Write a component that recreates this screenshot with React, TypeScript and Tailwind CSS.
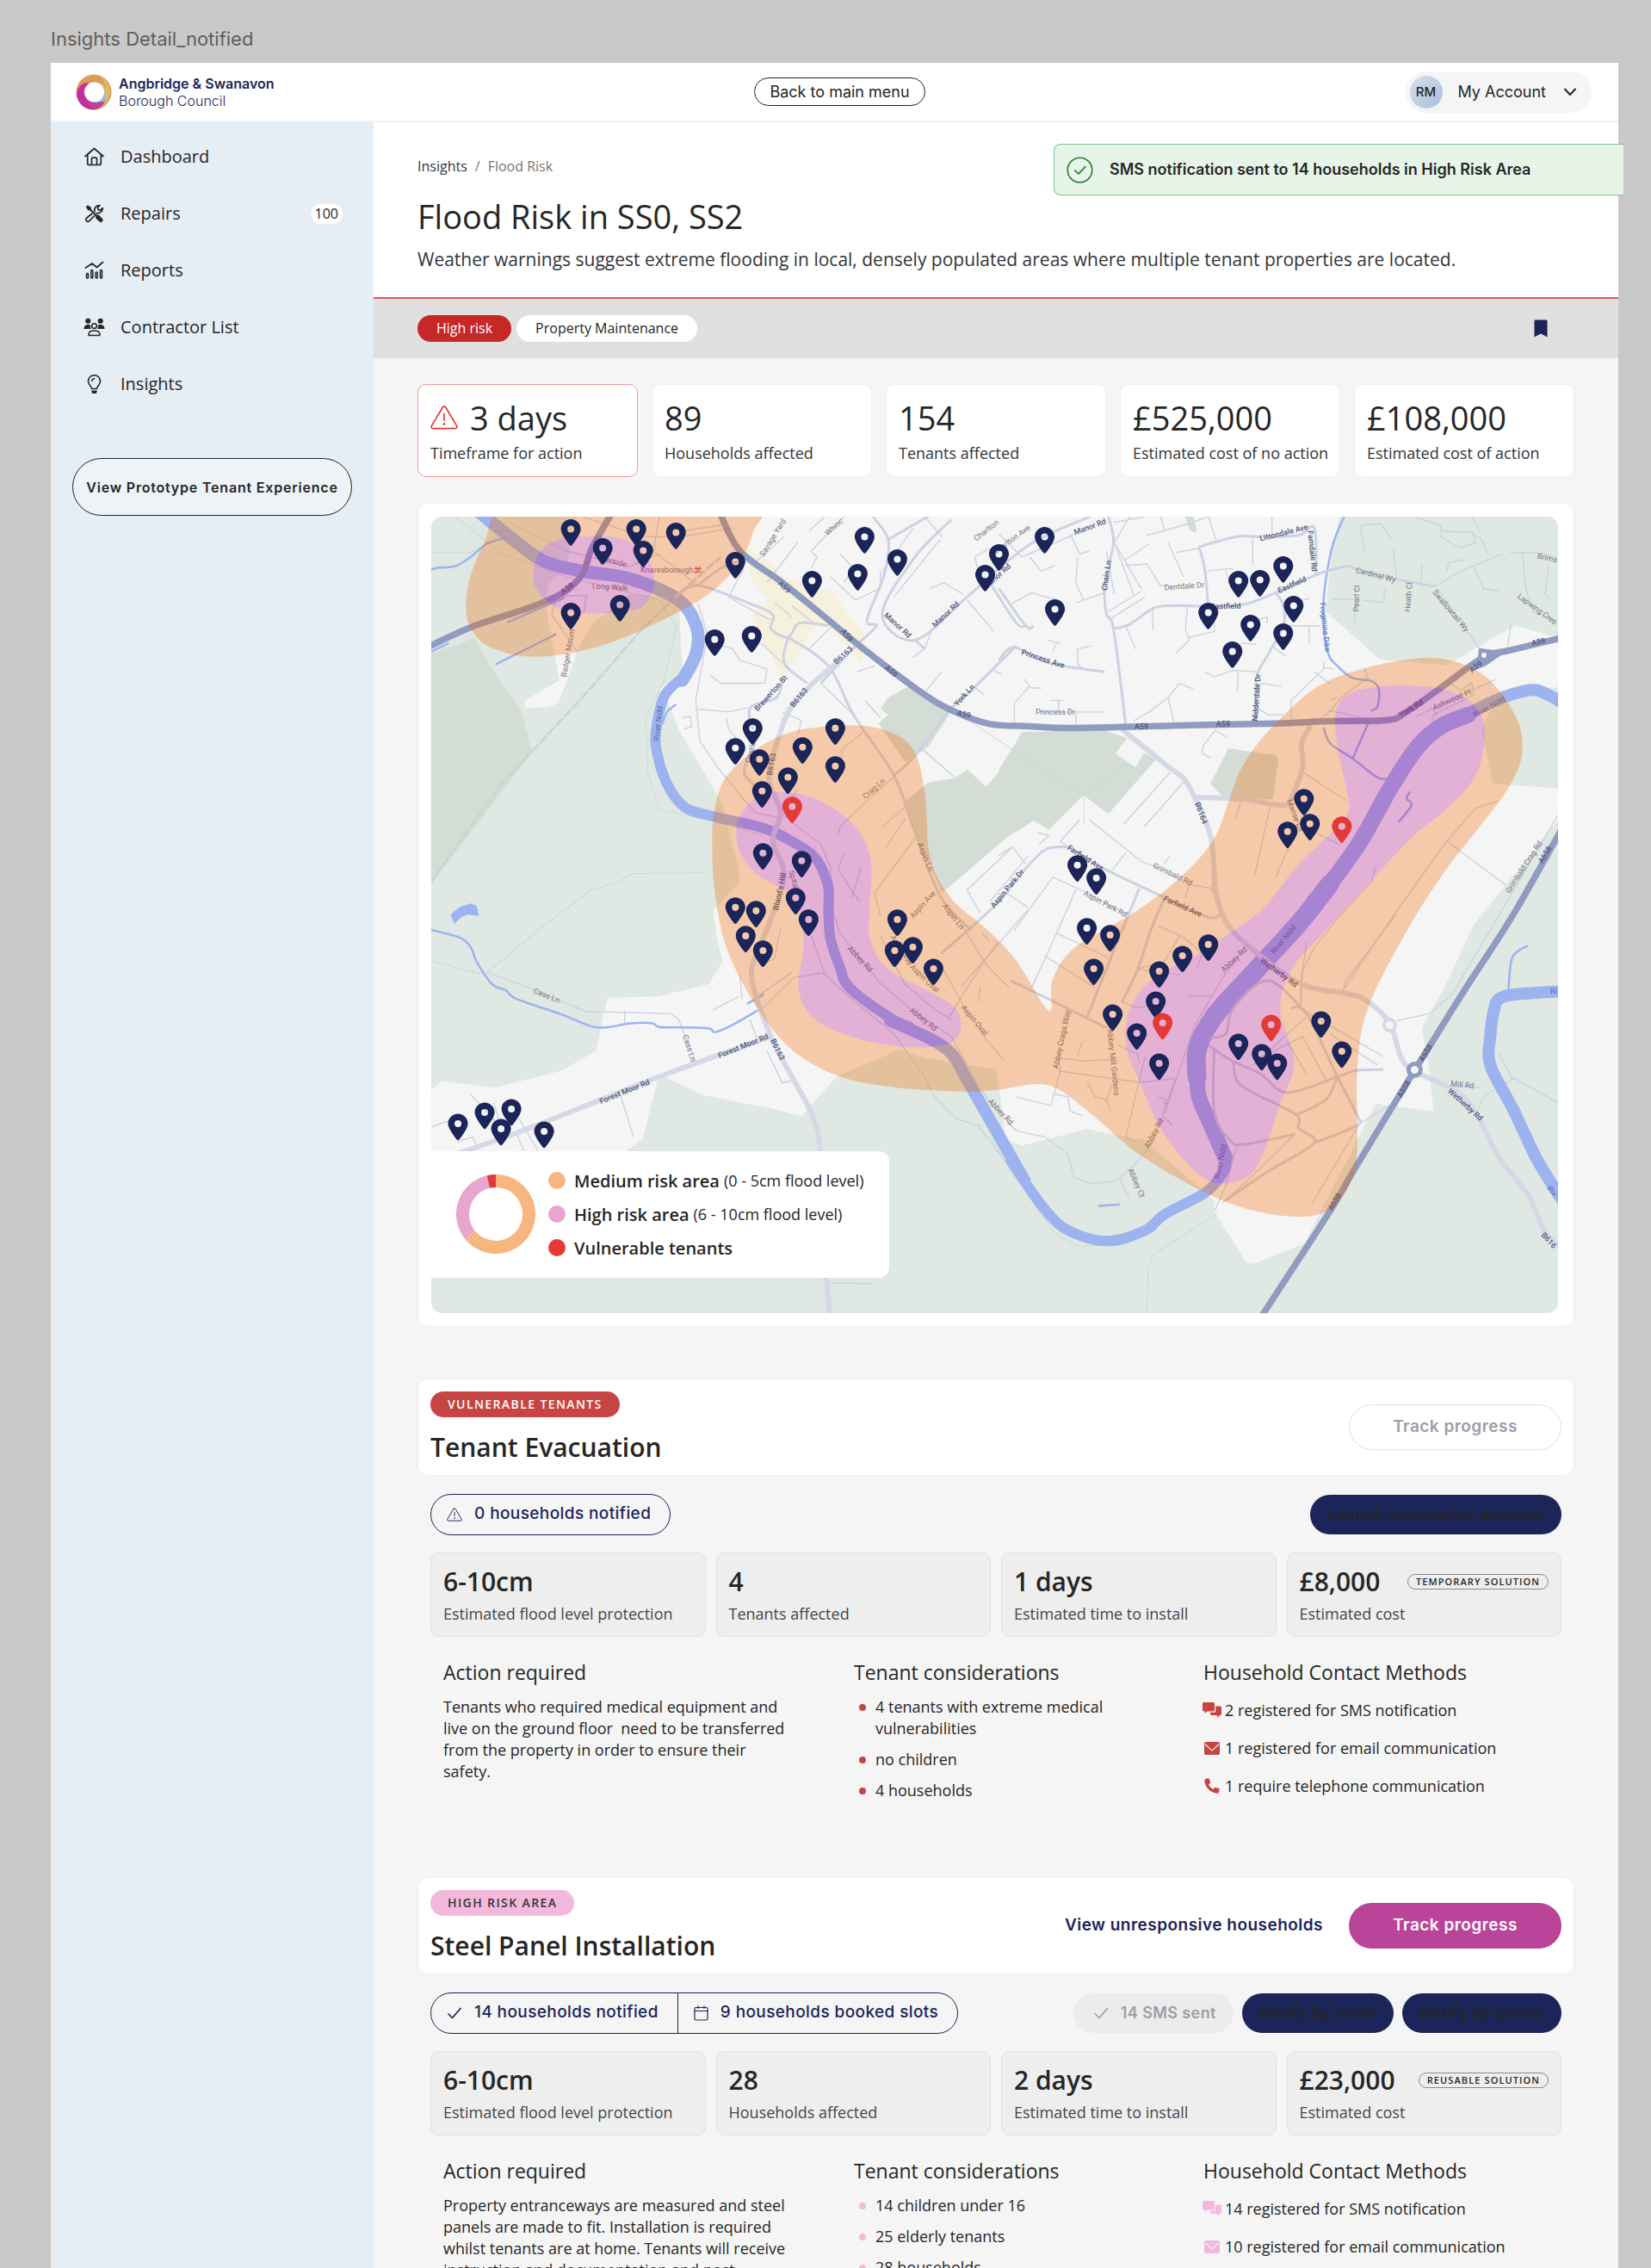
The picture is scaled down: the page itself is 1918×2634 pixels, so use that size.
import React from "react";

/* ------------------------------------------------------------------ */
/* Icons                                                               */
/* ------------------------------------------------------------------ */

type IconProps = { className?: string };

const Logo = () => (
  <svg viewBox="0 0 42 42" className="size-[42px] shrink-0" aria-hidden="true">
    <circle cx="21" cy="21" r="20.5" fill="#dc9d5c" />
    <path d="M28 2A20.5 20.5 0 0 1 31 37C39 30 37 10 28 2Z" fill="#dcbc66" />
    <path d="M25 10A14 14 0 0 1 36 30L30 26Z" fill="#dcbc66" />
    <path d="M14 10A20.5 20.5 0 0 0 21 41.500C27 41 32 37 34 30L21 28Z" fill="#b9449a" />
    <path d="M14 10C4 10 0 20 1.500 27C4 35 10 41 21 41.500C13 36 8 22 14 10Z" fill="#c3309a" />
    <path d="M34 20L34 32L22 33Z" fill="#9fb5d8" />
    <circle cx="21.500" cy="21" r="11.500" fill="#fff" />
  </svg>
);

const HomeIcon = ({ className }: IconProps) => (
  <svg viewBox="0 0 24 24" className={className} fill="none" stroke="currentColor" strokeWidth="1.700" strokeLinecap="round" strokeLinejoin="round" aria-hidden="true">
    <path d="M1.500 11.500L12 2.500L22.500 11.500" />
    <path d="M4.200 10V19.500A2 2 0 0 0 6.200 21.500H17.800A2 2 0 0 0 19.800 19.500V10" />
    <path d="M9 21.200V14.500A1.300 1.300 0 0 1 10.300 13.200H13.700A1.300 1.300 0 0 1 15 14.500V21.200" />
  </svg>
);

const ToolsIcon = ({ className }: IconProps) => (
  <svg viewBox="0 0 24 24" className={className} aria-hidden="true">
    <path d="M12.500 9.500C11.700 6 14 2.300 18.500 2.500L16 5.300L16.600 7.600L19 8.200L21.700 5.600C22 9.500 18.800 12 15 11.500L6.200 20.700A2.300 2.300 0 0 1 2.900 17.500L12.500 9.500Z" fill="none" stroke="currentColor" strokeWidth="1.700" strokeLinejoin="round" />
    <path d="M2 4.300L4.300 2L8.500 4.500L8.800 7L15 13.300L17.200 13.200L22.300 18.500C23 20.500 20.500 23 18.500 22.300L13.200 17.200L13.300 15L7 8.800L4.500 8.500Z" fill="currentColor" stroke="#e5edf5" strokeWidth=".6" />
  </svg>
);

const ChartIcon = ({ className }: IconProps) => (
  <svg viewBox="0 0 24 24" className={className} fill="none" stroke="currentColor" strokeLinecap="round" strokeLinejoin="round" aria-hidden="true">
    <path d="M2 9L9.500 4L15 8.500L22 2.500" strokeWidth="1.700" />
    <g strokeWidth="1.500">
      <rect x="3" y="15.500" width="2" height="5.500" rx=".8" />
      <rect x="8.300" y="11.500" width="2" height="9.500" rx=".8" />
      <rect x="13.700" y="14" width="2" height="7" rx=".8" />
      <rect x="19" y="11.500" width="2" height="9.500" rx=".8" />
    </g>
  </svg>
);

const PeopleIcon = ({ className }: IconProps) => (
  <svg viewBox="0 0 26 22" className={className} aria-hidden="true">
    <circle cx="5.500" cy="3.500" r="3.200" fill="currentColor" />
    <circle cx="20.500" cy="3.500" r="3.200" fill="currentColor" />
    <path d="M.5 13C.5 9.500 3 8 5.500 8C7 8 8 8.500 8.500 9C8.200 10.500 8.500 12 9 13Z" fill="currentColor" />
    <path d="M25.500 13C25.500 9.500 23 8 20.500 8C19 8 18 8.500 17.500 9C17.800 10.500 17.500 12 17 13Z" fill="currentColor" />
    <circle cx="13" cy="9.500" r="3" fill="none" stroke="currentColor" strokeWidth="1.600" />
    <path d="M6.300 20.800C6.300 17 8.500 15.500 11 15.500H15C17.500 15.500 19.700 17 19.700 20.800Z" fill="none" stroke="currentColor" strokeWidth="1.600" strokeLinejoin="round" />
  </svg>
);

const BulbIcon = ({ className }: IconProps) => (
  <svg viewBox="0 0 24 24" className={className} fill="none" stroke="currentColor" strokeWidth="1.600" strokeLinecap="round" strokeLinejoin="round" aria-hidden="true">
    <path d="M9 17.500C9 14.500 5 13 5 8.700A7 7 0 0 1 19 8.700C19 13 15 14.500 15 17.500Z" />
    <path d="M9.300 8.500A3 3 0 0 1 12 5.700" />
    <path d="M9.500 20.200H14.500L13.700 22.300H10.300Z" fill="currentColor" />
  </svg>
);

const WarningIcon = ({ className }: IconProps) => (
  <svg viewBox="0 0 32 28" className={className} fill="none" stroke="currentColor" strokeWidth="1.700" strokeLinecap="round" strokeLinejoin="round" aria-hidden="true">
    <path d="M14.300 2L1.400 23.600A2 2 0 0 0 3.100 26.700H28.900A2 2 0 0 0 30.600 23.600L17.700 2A2 2 0 0 0 14.300 2Z" />
    <path d="M16 9.500V17" />
    <circle cx="16" cy="21.500" r=".6" fill="currentColor" />
  </svg>
);

const CheckIcon = ({ className }: IconProps) => (
  <svg viewBox="0 0 16 14" className={className} fill="none" stroke="currentColor" strokeWidth="1.700" strokeLinecap="round" strokeLinejoin="round" aria-hidden="true">
    <path d="M1 8L5.500 12.500L15 1.500" />
  </svg>
);

const CircleCheckIcon = ({ className }: IconProps) => (
  <svg viewBox="0 0 32 32" className={className} fill="none" stroke="currentColor" strokeWidth="1.700" strokeLinecap="round" strokeLinejoin="round" aria-hidden="true">
    <circle cx="16" cy="16" r="14.700" />
    <path d="M10 16.500L14.500 20.500L22.500 12" />
  </svg>
);

const CalendarIcon = ({ className }: IconProps) => (
  <svg viewBox="0 0 17 18" className={className} fill="none" stroke="currentColor" strokeWidth="1.200" strokeLinecap="round" strokeLinejoin="round" aria-hidden="true">
    <rect x="1" y="2.500" width="15" height="14.500" rx="1.500" />
    <path d="M1 6.500H16M5 .8V3.500M12 .8V3.500" />
  </svg>
);

const ChevronIcon = ({ className }: IconProps) => (
  <svg viewBox="0 0 16 10" className={className} fill="none" stroke="currentColor" strokeWidth="2" strokeLinecap="round" strokeLinejoin="round" aria-hidden="true">
    <path d="M2 1.500L8 8L14 1.500" />
  </svg>
);

const BookmarkIcon = ({ className }: IconProps) => (
  <svg viewBox="0 0 17 22" className={className} fill="currentColor" aria-hidden="true">
    <path d="M2 .5H15A1.500 1.500 0 0 1 16.500 2V21.500L8.500 17.500L.5 21.500V2A1.500 1.500 0 0 1 2 .5Z" />
  </svg>
);

const ChatIcon = ({ className }: IconProps) => (
  <svg viewBox="0 0 22 18" className={className} fill="currentColor" aria-hidden="true">
    <path d="M1.500 0H12.500A1.500 1.500 0 0 1 14 1.500V9A1.500 1.500 0 0 1 12.500 10.500H5.500L2.800 13V10.500H1.500A1.500 1.500 0 0 1 0 9V1.500A1.500 1.500 0 0 1 1.500 0Z" />
    <path d="M15.200 4.500H20.500A1.500 1.500 0 0 1 22 6V13.500A1.500 1.500 0 0 1 20.500 15H19.200V17.800L16 15H10.500A1.500 1.500 0 0 1 9 13.500V11.800H13.700A1.500 1.500 0 0 0 15.200 10.300Z" />
  </svg>
);

const MailIcon = ({ className }: IconProps) => (
  <svg viewBox="0 0 18 15" className={className} aria-hidden="true">
    <rect width="18" height="15" rx="1.700" fill="currentColor" />
    <path d="M1 2.500L7.800 9.200A1.700 1.700 0 0 0 10.200 9.200L17 2.500" fill="none" stroke="#f5f5f5" strokeWidth="1.100" />
  </svg>
);

const PhoneIcon = ({ className }: IconProps) => (
  <svg viewBox="0 0 18 18" className={className} fill="currentColor" aria-hidden="true">
    <path d="M3.800.3L5.500.8A1 1 0 0 1 6.200 1.600L7 5A1.200 1.200 0 0 1 6.500 6.300L5 7.500C6.200 9.800 8.200 11.800 10.500 13L11.700 11.500A1.200 1.200 0 0 1 13 11.100L16.700 12A1.200 1.200 0 0 1 17.600 13.300L17.200 16A2 2 0 0 1 15 17.700C7 17 1 11 .3 3A2 2 0 0 1 1.800.9Z" />
  </svg>
);

/* ------------------------------------------------------------------ */
/* Map drawing                                                         */
/* ------------------------------------------------------------------ */

type Sheet = "nw" | "ne" | "sw" | "se";
const ORIGIN: Record<Sheet, [number, number]> = {
  nw: [0, 0],
  ne: [1523, 0],
  sw: [0, 1440],
  se: [1523, 1440],
};

// Survey units on a sheet -> drawing units of the map.
const place = (sheet: Sheet, u: number, v: number): [number, number] => [
  Math.round(((u + ORIGIN[sheet][0]) / 2.24 - 21) * 10) / 10,
  Math.round(((v + ORIGIN[sheet][1]) / 3 - 20) * 10) / 10,
];

const parse = (sheet: Sheet, pts: string) =>
  pts.split(" ").map((p) => {
    const [u, v] = p.split(",").map(Number);
    return place(sheet, u, v);
  });

const poly = (sheet: Sheet, pts: string, close = false) =>
  "M" + parse(sheet, pts).map((p) => p.join(" ")).join("L") + (close ? "Z" : "");

const curve = (sheet: Sheet, pts: string, close = false) => {
  const p = parse(sheet, pts);
  const n = p.length;
  const at = (i: number) => (close ? p[(i + n) % n] : p[Math.max(0, Math.min(n - 1, i))]);
  let d = "M" + p[0].join(" ");
  for (let i = 0; i < (close ? n : n - 1); i++) {
    const [a, b, c, e] = [at(i - 1), at(i), at(i + 1), at(i + 2)];
    d += `C${b[0] + (c[0] - a[0]) / 6} ${b[1] + (c[1] - a[1]) / 6} ${c[0] - (e[0] - b[0]) / 6} ${c[1] - (e[1] - b[1]) / 6} ${c[0]} ${c[1]}`;
  }
  return d + (close ? "Z" : "");
};

const GREEN: [Sheet, string][] = [
  ["nw", "0,0 425,0 425,60 400,230 350,300 345,370 380,630 290,700 290,726 350,723 378,710 430,520 460,440 560,330 690,340 700,600 640,660 668,720 690,800 800,1050 850,1300 845,1340 780,1430 776,1560 0,1560"],
  ["sw", "0,0 780,0 790,90 805,170 768,248 640,290 505,295 475,480 385,550 210,608 150,597 75,585 0,670"],
  ["sw", "640,560 750,633 930,680 1010,708 1100,570 1265,475 1330,505 1515,545 1525,620 1540,790 1583,810 1751,752 1898,790 2083,1000 2083,1040 2168,1220 2188,1220 2318,1150 2503,665 2653,690 2643,550 2623,400 2678,270 2758,40 3023,-400 3023,1480 0,1480 0,830 555,830 597,785"],
  ["ne", "890,40 1500,40 1500,500 1345,440 1300,470 1165,578 990,557 850,390 865,180"],
  ["ne", "1330,655 1500,655 1500,1010 1285,990 1255,800 1290,700"],
];

const WOOD: [Sheet, string][] = [
  ["nw", "0,560 160,482 200,580 280,735 310,880 0,1420"],
  ["nw", "1210,780 1235,750 1215,730 1235,690 1290,650 1400,735 1340,860 1280,915"],
  ["nw", "1280,1050 1340,985 1410,970 1440,940 1490,1000 1568,880 1568,1150 1375,1370 1320,1200"],
  ["ne", "0,1190 0,940 40,855 60,810 270,802 333,830 303,885 355,932 378,882 408,905 285,1095 220,1030 130,1150 90,1118 60,1145"],
  ["ne", "550,990 597,867 718,890 727,905 712,1045 582,1035"],
  ["ne", "478,40 503,40 515,115 498,110"],
];

const RIVER: [Sheet, number, string][] = [
  ["nw", 15, "150,20 260,140 340,215 440,250 560,275 690,350 738,450 735,540 700,630"],
  ["nw", 12, "712,610 655,680 632,800 634,880 660,990 705,1070 770,1100 900,1140 970,1178"],
  ["nw", 12, "950,1165 1040,1240 1078,1340 1080,1440 1085,1530 1110,1630 1135,1700 1240,1805 1290,1835"],
  ["sw", 14, "1240,375 1340,435 1400,490 1440,580 1500,720 1568,880 1590,930"],
  ["se", 12, "30,860 75,950 125,1040 180,1105 280,1142 380,1105 430,1050 540,970 588,890 588,830"],
  ["se", 18, "588,850 545,720 520,640 515,560 515,470 560,360"],
  ["se", 22, "515,570 517,470 560,360 640,240 730,110 790,20 860,-100"],
  ["ne", 19, "820,1400 860,1340 940,1190 1020,1000 1090,860 1150,790 1220,750"],
  ["ne", 14, "1140,795 1220,745 1310,690 1380,664 1420,675 1500,735"],
  ["se", 14, "1500,270 1345,283 1300,300 1287,340 1278,430 1278,530 1340,690 1400,860 1470,1010"],
];

const STREAM: [Sheet, string][] = [
  ["ne", "905,40 870,150 850,280 843,400 855,530 880,580 920,622 968,632 988,660 985,720 970,735"],
  ["sw", "40,57 120,85 150,120 165,170 207,250 240,268 270,300 380,350 465,395 510,397 560,385 620,383 640,397 700,398 770,402 785,415 830,390 895,340"],
  ["sw", "870,315 910,285"],
  ["nw", "40,247 65,238 110,232 150,200 190,155 230,138"],
  ["nw", "40,535 90,502"],
  ["nw", "217,573 370,470"],
  ["nw", "247,427 392,343"],
  ["nw", "648,780 660,740 682,715"],
  ["ne", "845,797 862,850 920,902 985,968 1022,970"],
  ["ne", "965,765 920,902"],
  ["ne", "1068,1020 1060,1042 1073,1065 1040,1122"],
  ["se", "1325,272 1335,155 1373,115"],
  ["se", "260,1020 313,1015"],
];

const A_ROAD: [Sheet, string][] = [
  ["nw", "30,520 150,445 300,378 390,325 440,260 465,170 520,40"],
  ["nw", "795,40 850,180 960,290 1080,420 1180,530 1330,680 1410,740 1500,782 1600,790 1723,796 2020,786 2243,780 2383,772 2533,768 2583,740 2673,655 2783,550 2853,525 3000,478"],
  ["se", "680,1410 860,1040 930,880 1080,550 1210,270 1340,0 1500,-380"],
];

const B_ROAD: [Sheet, string][] = [
  ["nw", "1100,570 1040,640 980,730 950,830 925,970 955,1090 935,1190 965,1310 925,1480 890,1590 882,1680 930,1870 985,2010 1040,2150 1060,2290 1068,2600 1085,2860"],
  ["ne", "320,800 440,930 490,990 550,1170 565,1370 600,1490 690,1600 790,1690 900,1720 950,1740 1015,1820 1045,1940 1080,1990 1200,2070 1250,2160 1300,2290 1380,2430 1420,2550 1490,2640"],
  ["sw", "100,845 290,755 640,570 930,430"],
  ["ne", "515,1037 640,1045 735,1065 760,1040 790,930 787,850 810,790"],
];

const ROAD: [Sheet, string][] = [
  ["nw", "1195,60 1235,140 1225,260 1180,420 1205,440 1150,510"],
  ["nw", "1235,140 1350,50"],
  ["nw", "1080,440 1005,430 975,480 930,450 935,400 870,360 740,300 680,340"],
  ["nw", "975,480 965,570 1025,640"],
  ["nw", "975,480 1080,580 1145,750 1250,960 1300,1140 1370,1380 1450,1500"],
  ["nw", "1400,70 1305,200 1220,400 1305,490 1440,340 1600,160 1760,60"],
  ["nw", "1305,490 1330,520"],
  ["nw", "1500,290 1568,430 1595,440"],
  ["nw", "1568,510 1455,660 1405,720 1380,760 1300,900 1250,960"],
  ["nw", "960,620 945,690 880,720 875,765 885,800"],
  ["nw", "1150,510 1060,640"],
  ["nw", "885,870 860,950 900,1010"],
  ["nw", "740,300 800,240 850,215"],
  ["ne", "285,60 298,150 275,300 280,400 298,450 330,785"],
  ["ne", "298,450 340,435 400,380 450,370 560,372 640,365 720,325 830,260 905,233 935,245 1040,280 1135,303"],
  ["ne", "520,165 535,240 545,380"],
  ["ne", "520,165 620,130 690,130 780,125 820,98 825,260"],
  ["ne", "720,325 740,370 740,440 700,540 670,620 668,775"],
  ["ne", "0,310 70,440 90,440"],
  ["ne", "0,560 40,515 130,570 275,600"],
  ["ne", "180,1210 120,1220 60,1300 0,1400 -80,1500 -150,1580"],
  ["ne", "180,1210 280,1290 430,1385 545,1455 580,1440"],
  ["ne", "430,1390 395,1500 360,1640 320,1750"],
  ["ne", "365,1355 320,1500 260,1700 230,1800"],
  ["se", "30,235 130,300 280,400"],
  ["se", "610,515 630,600 770,700 780,750 820,800 700,900 590,1000"],
  ["se", "545,460 600,510 680,560 750,625 880,570 930,548 1000,545"],
  ["se", "760,330 800,350 880,570 930,700 930,740 820,800"],
  ["se", "880,570 850,650 770,705"],
  ["se", "560,470 560,690 600,790 640,805 770,770"],
  ["se", "550,435 590,420 610,330 700,235 800,350"],
];

const LANE: [Sheet, string][] = [
  ["nw", "860,240 820,340 900,400 930,420"], ["nw", "1000,150 920,290"], ["nw", "965,130 880,230"],
  ["nw", "1120,60 1035,180 1050,200 1035,240"], ["nw", "1070,60 1030,110"], ["nw", "1110,190 1145,240 1120,290"],
  ["nw", "1215,250 1215,310 1150,350 1085,270"], ["nw", "1370,140 1250,340"], ["nw", "1330,60 1375,130"],
  ["nw", "1300,100 1220,250"], ["nw", "1345,310 1380,290 1430,330"], ["nw", "1440,350 1510,460"], ["nw", "1480,300 1460,200 1500,170"],
  ["nw", "1350,450 1330,520 1300,550"], ["nw", "1375,600 1325,680"], ["nw", "1455,650 1485,680"], ["nw", "1505,590 1530,610"],
  ["nw", "740,360 765,470 735,700 745,840 790,930 850,1030 890,1090 955,1110"], ["nw", "775,500 830,520 850,560"],
  ["nw", "850,560 920,590 915,640 800,640 770,610"], ["nw", "740,730 820,740 870,725"], ["nw", "700,760 720,755 725,790 705,800"],
  ["nw", "815,760 820,800 840,830"], ["nw", "960,740 1010,770 1000,820"], ["nw", "1175,700 1215,760"], ["nw", "1060,640 1145,750"],
  ["nw", "1170,810 1115,870 1115,900"], ["nw", "1315,860 1410,970"], ["nw", "1000,1010 955,1090 1000,1140 1060,1200 1085,1280 1090,1420"],
  ["nw", "1250,965 1180,1050 1110,1140 1105,1170"], ["nw", "1280,1070 1220,1140"], ["nw", "1280,1110 1230,1210"], ["nw", "1310,1170 1200,1370 1215,1450"],
  ["nw", "1120,1230 1105,1290 1160,1400"], ["nw", "1165,1280 1140,1390"], ["nw", "1555,1215 1440,1360 1475,1440"], ["nw", "1600,1240 1500,1400"],
  ["nw", "430,540 360,400 375,335 450,335 445,390 400,440"], ["nw", "250,80 400,180 560,235 640,190"], ["nw", "640,60 625,180 740,300"], ["nw", "700,110 800,90 810,60"],
  ["nw", "440,60 600,130 700,130 830,100"], ["nw", "905,500 960,570"], ["nw", "985,370 1040,430"], ["nw", "940,360 985,410"], ["nw", "1030,520 1090,440"], ["nw", "1200,580 1155,600"],
  ["ne", "0,120 60,200 200,120"], ["ne", "80,200 110,250 145,230"], ["ne", "185,120 210,190 235,180"], ["ne", "205,200 200,290 220,350"],
  ["ne", "300,80 380,60"], ["ne", "385,125 480,90 545,60"], ["ne", "420,60 430,105"], ["ne", "340,60 300,150 370,310"], ["ne", "330,210 390,155"], ["ne", "330,230 385,225 420,300 440,300"],
  ["ne", "440,150 480,270"], ["ne", "300,150 350,330"], ["ne", "280,180 300,330"], ["ne", "285,390 370,320"], ["ne", "285,420 380,340"], ["ne", "200,360 275,325"], ["ne", "30,365 85,325 150,350"],
  ["ne", "330,440 355,520"], ["ne", "400,375 400,455"], ["ne", "490,375 485,450 495,490 460,535"], ["ne", "495,480 560,460 560,375"], ["ne", "540,250 610,240"], ["ne", "590,250 600,290"],
  ["ne", "660,130 660,230"], ["ne", "710,60 710,125"], ["ne", "545,60 565,140"], ["ne", "460,185 520,170"], ["ne", "740,440 835,440"], ["ne", "807,440 807,500"], ["ne", "750,360 810,345"], ["ne", "710,510 745,545"],
  ["ne", "535,600 560,618 610,595 670,600"], ["ne", "622,600 620,665"], ["ne", "680,640 735,650"], ["ne", "670,725 700,750 740,750"], ["ne", "845,565 845,590 760,700 760,770"], ["ne", "845,585 870,590"], ["ne", "820,600 860,640"],
  ["ne", "635,430 698,410 698,430"], ["ne", "630,500 670,505"], ["ne", "125,490 160,500"], ["ne", "150,500 140,530"], ["ne", "205,575 205,520 240,510"], ["ne", "220,590 205,575"], ["ne", "40,780 40,710 80,650 65,625"], ["ne", "80,655 110,658"],
  ["ne", "135,700 165,700"], ["ne", "155,700 155,740"], ["ne", "105,740 275,740"], ["ne", "200,740 200,785"], ["ne", "350,772 390,740 440,690 470,640 505,660"], ["ne", "440,690 455,775"],
  ["ne", "565,800 530,860 530,885 550,900"], ["ne", "565,805 595,830"], ["ne", "445,950 325,1130"], ["ne", "480,985 378,1140"], ["ne", "790,950 905,1050"], ["ne", "630,1045 615,1115"], ["ne", "705,1070 665,1310"],
  ["ne", "760,1060 780,1130 890,1205"], ["ne", "780,1130 720,1315"], ["ne", "235,1115 370,1260 410,1280"], ["ne", "330,1230 295,1290"], ["ne", "445,1240 430,1270"], ["ne", "495,1340 555,1355"], ["ne", "485,1390 495,1335"], ["ne", "555,1320 555,1370"],
  ["ne", "0,1240 35,1210 70,1270"], ["ne", "20,1370 75,1420"], ["ne", "75,1430 -100,1700"], ["ne", "40,1500 140,1315 230,1370 340,1450"], ["ne", "200,1360 150,1510 85,1700"], ["ne", "150,1510 285,1595"], ["ne", "120,1590 250,1700"], ["ne", "100,1160 130,1170 105,1200"], ["ne", "210,1115 160,1190 180,1210"],
  ["ne", "980,1275 970,1330 880,1460 820,1560 790,1640 785,1760"], ["ne", "1300,1050 1240,1075 1165,1190 1100,1310 1000,1500 900,1700"], ["ne", "1165,1190 1320,1345"], ["ne", "1453,1100 1260,1540 1180,1720 1120,1790 1035,1815"],
  ["ne", "950,585 960,620 890,690 860,740 810,790"], ["ne", "855,735 895,745 960,765"], ["ne", "880,690 860,700"], ["ne", "1175,640 1200,665 1230,640 1235,680 1130,750 1125,785"], ["ne", "1085,755 1290,628"], ["ne", "1125,725 1140,755"],
  ["ne", "1135,303 1200,250 1310,190"], ["ne", "1140,310 1250,520"], ["ne", "1330,185 1400,185 1453,200"], ["ne", "940,90 995,85 1020,140"], ["ne", "940,90 950,180"], ["ne", "1025,175 1035,280"], ["ne", "1100,225 1098,290"],
  ["ne", "1080,62 1150,90 1150,130 1200,170 1240,150 1230,110"], ["ne", "1150,110 1230,115 1255,140 1270,190"], ["ne", "1210,210 1170,220 1165,250"], ["ne", "1230,60 1250,110"], ["ne", "1235,230 1260,310 1300,320"], ["ne", "928,300 925,435"], ["ne", "868,348 928,348"], ["ne", "948,350 1000,360 1005,310"],
  ["ne", "1362,185 1370,310 1390,390 1453,425"], ["ne", "1430,230 1420,330 1435,350"], ["ne", "1332,430 1322,520"],
  ["sw", "195,207 300,260 450,343 670,350 690,370 735,520"], ["sw", "550,340 550,390"], ["sw", "780,338 845,292"], ["sw", "850,215 855,300"], ["sw", "540,640 573,778"], ["sw", "150,632 210,720 215,790"], ["sw", "210,660 225,730"], ["sw", "275,715 325,830"], ["sw", "270,770 288,830"],
  ["sw", "47,745 110,715"], ["sw", "115,795 155,780 165,810"], ["sw", "920,480 960,592 985,583"], ["sw", "875,370 895,440"], ["sw", "1085,-30 1110,70 1215,245 1300,340 1400,430 1440,530 1490,640 1568,760"],
  ["sw", "985,207 900,285"], ["sw", "910,330 990,225 1065,208 1150,310 1250,420 1330,570 1350,630 1410,715 1470,740 1530,850"], ["sw", "1035,80 1070,210"], ["sw", "955,55 940,160 905,180"], ["sw", "1215,80 1280,250 1360,340 1400,370"], ["sw", "1380,200 1430,320 1490,440 1535,510"],
  ["sw", "1430,50 1490,180 1550,260"], ["sw", "1480,70 1500,100"], ["sw", "1470,310 1475,255"], ["sw", "1395,360 1440,260 1520,100"], ["sw", "1080,1288 1195,1290"],
  ["se", "45,640 135,670 160,550 155,500 185,350"], ["se", "155,505 220,515 300,510"], ["se", "205,500 215,450"], ["se", "155,550 370,590 460,575"], ["se", "230,590 250,640 280,650 295,600"], ["se", "280,650 290,690"], ["se", "310,460 360,490 365,520"],
  ["se", "460,575 400,800 345,890 300,935 240,942 195,920 180,840 120,780 50,760 20,730"], ["se", "315,925 340,995"], ["se", "490,287 555,290"], ["se", "640,120 580,230 510,390 430,700"], ["se", "415,45 475,80 530,140 515,190"], ["se", "470,80 430,170 360,195"],
  ["se", "360,195 470,215"], ["se", "320,310 360,330 400,320"], ["se", "380,500 330,780 355,800"], ["se", "800,360 660,530"], ["se", "700,490 790,430 850,580"], ["se", "750,450 800,560"], ["se", "780,330 1000,500"], ["se", "860,420 985,530"],
  ["se", "785,330 785,240 800,100"], ["se", "935,740 815,1010"], ["se", "770,770 640,940 580,1010"], ["se", "1040,650 930,740"], ["se", "430,710 450,740 440,720"], ["se", "415,640 435,650 430,670"], ["se", "1453,660 1340,575 1260,640 1245,690"], ["se", "1300,490 1335,575"], ["se", "1150,600 1250,607"], ["se", "1030,10 900,240 895,280"],
  ["se", "620,805 590,950 560,1040"], ["se", "140,630 180,640 185,690 215,705"],
];

const PATHWAY: [Sheet, string][] = [
  ["nw", "110,60 230,190 400,270 640,350 685,440 650,640 605,760 610,950 640,1080 780,1120 910,1170"],
  ["nw", "47,185 150,185 220,130"],
  ["nw", "760,1300 570,1303 540,1328 460,1362 330,1495 185,1655 47,1608"],
  ["nw", "1435,760 1568,880 1743,1030 1745,1135"],
  ["ne", "220,1028 265,990 330,920"],
  ["se", "385,1390 388,1240 400,1190 570,1045"],
  ["se", "0,830 100,1030 150,1120 205,1160 320,1157 410,1100"],
  ["sw", "1500,780 1568,930"],
];

const ORANGE: [Sheet, string][] = [
  ["nw", "230,30 185,150 150,260 137,370 150,450 200,515 320,548 500,505 700,385 800,295 860,190 885,110 898,30 700,10 400,10"],
  ["nw", "1120,787 1230,805 1300,870 1330,1020 1345,1250 1400,1390 1490,1495 1568,1605 1653,1780 1663,1670 1720,1560 1873,1440 2000,1310 2083,1180 2123,1040 2160,920 2243,780 2383,630 2623,552 2773,602 2865,750 2884,880 2850,1000 2773,1140 2685,1290 2585,1500 2483,1770 2455,1980 2455,2250 2440,2370 2380,2475 2273,2496 2103,2440 1898,2290 1763,2140 1653,2040 1523,2055 1430,2062 1240,2045 1100,2005 980,1910 890,1760 820,1580 790,1420 778,1250 785,1070 830,940 960,820"],
];

const PINK: [Sheet, string][] = [
  ["nw", "380,140 465,128 550,140 610,205 626,290 600,370 540,390 460,397 385,385 330,330 312,270 330,180"],
  ["nw", "940,1018 1050,1045 1150,1140 1190,1260 1186,1440 1190,1540 1240,1640 1390,1750 1424,1820 1400,1890 1290,1907 1150,1875 1040,1805 1002,1700 1015,1540 990,1390 900,1310 850,1230 842,1130 880,1050"],
  ["ne", "1050,648 1170,665 1240,725 1264,820 1240,960 1170,1070 1080,1170 980,1310 850,1500 760,1640 732,1780 768,1960 730,2110 690,2270 650,2355 580,2382 520,2350 450,2250 405,2150 370,2040 330,1900 345,1760 410,1660 520,1580 600,1510 690,1420 780,1270 900,1110 905,1020 880,860 878,730 930,665"],
];

const LABELS: [Sheet, number, number, number, string, string?][] = [
  ["nw", 400, 310, -35, "A59", "b"], ["nw", 935, 133, -58, "Savage Yard"], ["nw", 660, 247, 0, "Knaresborough", "p"], ["nw", 512, 305, 4, "Long Walk"],
  ["nw", 528, 218, 14, "erside"], ["nw", 402, 535, -80, "Badger Mount"], ["nw", 965, 305, 43, "A59", "b"], ["nw", 1260, 438, 42, "Manor Rd", "b"],
  ["nw", 1385, 400, -43, "Manor Rd", "b"], ["nw", 1128, 473, 52, "A59", "b"], ["nw", 1118, 543, -42, "B6163", "b"], ["nw", 1243, 598, 42, "A59", "b"],
  ["nw", 1433, 682, -48, "York Ln", "b"], ["nw", 1432, 748, 14, "A59", "b"], ["nw", 930, 675, -48, "Brewerton St", "b"], ["nw", 1003, 690, -50, "B6163", "b"],
  ["nw", 637, 780, -84, "River Nidd", "r"], ["nw", 877, 880, -74, "Castle"], ["nw", 932, 922, -80, "B6163", "b"], ["nw", 1198, 1007, -42, "Crag Ln"],
  ["nw", 1332, 1245, 68, "Aspin Ln"], ["nw", 1405, 1452, 52, "Aspin Ln"], ["nw", 1325, 1410, -48, "Aspin Ave"], ["nw", 1545, 1355, -50, "Aspin Park Dr", "b"],
  ["nw", 953, 1365, -78, "Bland’s Hill", "b"], ["nw", 990, 1325, 74, "Spital"], ["nw", 1094, 96, -42, "Whinc"], ["nw", 1490, 108, -38, "Charlton"], ["nw", 1556, 140, -36, "Charlton Ave"],
  ["ne", -5, 268, -42, "Manor Rd", "b"], ["ne", 237, 95, -20, "Manor Rd", "b"], ["ne", 280, 265, -82, "Chain Ln", "b"], ["ne", 115, 555, 18, "Princess Ave", "b"],
  ["ne", 147, 742, 0, "Princess Dr"], ["ne", 371, 790, 0, "A59", "b"], ["ne", 583, 784, 0, "A59", "b"], ["ne", 482, 302, -4, "Dentdale Dr"],
  ["ne", 741, 116, -14, "Littondale Ave", "b"], ["ne", 815, 180, 84, "Farndale Rd", "b"], ["ne", 762, 297, -24, "Eastfield", "b"], ["ne", 590, 372, -2, "Eastfield", "b"],
  ["ne", 670, 690, -86, "Nidderdale Dr", "b"], ["ne", 848, 445, 84, "Frogmine Dike", "w"], ["ne", 930, 345, -88, "Pearl Cl"], ["ne", 1065, 340, -86, "Heath Cl"],
  ["ne", 980, 263, 14, "Cardinal Wy"], ["ne", 1175, 388, 50, "Swallowtail Wy"], ["ne", 1400, 382, 36, "Lapwing Cres"], ["ne", 1426, 204, 12, "Brims"],
  ["ne", 1403, 496, -12, "A59", "b"], ["ne", 1240, 583, -38, "A59", "b"], ["ne", 1072, 727, -32, "York Rd", "b"], ["ne", 1178, 697, -24, "Ashwood Pl"],
  ["ne", 1275, 722, -30, "River Nidd", "r"], ["ne", 526, 1092, 70, "B6164", "b"], ["ne", 225, 1248, 32, "Farfield Ave", "b"], ["ne", 452, 1305, 26, "Grimbald Rd"],
  ["ne", 277, 1408, 28, "Aspin Park Rd"], ["ne", 478, 1417, 24, "Farfield Ave", "b"], ["ne", 770, 1100, 70, "Manse Ln"], ["ne", 1365, 1280, -57, "Grimbald Crag Rd"], ["ne", 1420, 1237, -59, "A658", "b"],
  ["sw", 347, 287, 22, "Cass Ln"], ["sw", 718, 470, 72, "Cass Ln"], ["sw", 550, 622, -22, "Forest Moor Rd", "b"], ["sw", 858, 463, -22, "Forest Moor Rd", "b"],
  ["sw", 948, 475, 64, "B6163", "b"], ["sw", 1162, 160, 46, "Abbey Rd"], ["sw", 1270, 130, 58, "Aspin Ave"], ["sw", 1330, 228, 44, "Aspin Oval"],
  ["sw", 1327, 370, 38, "Abbey Rd"], ["sw", 1460, 373, 50, "Aspin Oval"], ["sw", 1528, 692, 46, "Abbey Rd"],
  ["se", 740, 92, -50, "River Nidd", "r"], ["se", 612, 162, -44, "Abbey Rd"], ["se", 728, 207, 36, "Wetherby Rd", "b"], ["se", 163, 440, -78, "Abbey Crags Way"],
  ["se", 298, 520, 84, "Abbey Mill Gardens"], ["se", 403, 767, -62, "Abbey Rd"], ["se", 576, 865, -78, "River Nidd", "r"], ["se", 358, 940, 66, "Abbey Ct"],
  ["se", 1110, 487, -60, "A658", "b"], ["se", 1053, 613, -60, "A658", "b"], ["se", 873, 1005, -60, "A658", "b"], ["se", 1205, 598, 6, "Mill Rd"],
  ["se", 1213, 667, 42, "Wetherby Rd", "b"], ["se", 1430, 1140, 48, "B616", "b"], ["se", 1442, 272, -6, "Ri", "r"], ["se", 1438, 968, 50, "Riv", "r"],
];

const LABEL_FILL: Record<string, string> = { b: "#505779", r: "#5a6aa8", w: "#4a6ec0", p: "#7a6490" };

const PINS: [number, number][] = [
  [663, 634], [739, 634], [700, 656], [747, 659], [785, 638], [663, 731], [720, 722], [854, 672], [830, 762], [873, 758], [943, 694], [996, 686],
  [1004, 643], [1042, 669], [1160, 663], [1144, 687], [874, 865], [854, 888], [882, 901], [932, 887], [970, 865], [970, 909], [915, 922], [885, 938],
  [886, 1010], [931, 1019], [924, 1062], [854, 1073], [878, 1077], [939, 1087], [866, 1106], [886, 1123], [1042, 1087], [1039, 1123], [1060, 1119], [1084, 1144],
  [532, 1324], [563, 1311], [594, 1307], [582, 1330], [632, 1333], [1213, 643], [1225, 727], [1403, 731], [1438, 694], [1463, 693], [1490, 677], [1502, 723],
  [1452, 745], [1490, 755], [1431, 776], [1514, 947], [1521, 976], [1495, 985], [1251, 1024], [1273, 1039], [1262, 1097], [1289, 1105], [1270, 1144],
  [1403, 1116], [1373, 1129], [1346, 1147], [1342, 1182], [1292, 1197], [1320, 1219], [1346, 1254], [1438, 1231], [1465, 1243], [1483, 1254], [1534, 1205], [1558, 1240],
];
const VULNERABLE_PINS: [number, number][] = [[920, 956], [1558, 979], [1350, 1207], [1476, 1209]];

const PIN_PATH =
  "M215.700 499.200C267 435 384 279.400 384 192C384 86 298 0 192 0S0 86 0 192c0 87.400 117 243 168.300 307.200c12.300 15.300 35.100 15.300 47.400 0zM192 125a67 67 0 1 0 0 134 67 67 0 1 0 0-134z";

const Pin = ({ at, fill }: { at: [number, number]; fill: string }) => (
  <path d={PIN_PATH} fill={fill} fillRule="evenodd" transform={`translate(${at[0] - 501 - 11.5} ${at[1] - 600 - 31}) scale(.06)`} />
);

const FloodMap = () => (
  <svg viewBox="0 0 1308 924" className="block h-auto w-full rounded-xl" role="img" aria-label="Flood risk map of tenant properties">
    <rect width="1308" height="924" fill="#f5f5f5" />
    <g fill="#dfe8e2">{GREEN.map(([s, p], i) => <path key={i} d={poly(s, p, true)} />)}</g>
    <g fill="#d3ddd5">{WOOD.map(([s, p], i) => <path key={i} d={poly(s, p, true)} />)}</g>
    <path d={poly("nw", "860,140 890,190 925,215 960,270 1090,320 1130,400 1180,480 1165,572 1130,520 1080,440 1040,450 1010,520 960,620 905,480 880,400 925,350 880,280", true)} fill="#f6f1dc" />
    <path d={poly("nw", "97,1445 122,1418 150,1407 165,1415 171,1450 140,1445 122,1458 107,1478", true)} fill="#9cb3f0" />
    <g fill="none" stroke="#bfd6cd" strokeWidth="1" strokeDasharray="3 1">{PATHWAY.map(([s, p], i) => <path key={i} d={poly(s, p)} />)}</g>
    <path d={poly("nw", "40,1345 230,990 440,690 590,460 690,330 800,200")} fill="none" stroke="#ccd5d2" strokeWidth="3" strokeDasharray="12 2" />
    <g fill="none" stroke="#cdd2e2" strokeWidth="1.4" strokeLinejoin="round">{LANE.map(([s, p], i) => <path key={i} d={poly(s, p)} />)}</g>
    <g fill="none" stroke="#9cb3f0" strokeLinecap="round" strokeLinejoin="round">
      {STREAM.map(([s, p], i) => <path key={i} d={curve(s, p)} strokeWidth="2.5" />)}
      {RIVER.map(([s, w, p], i) => <path key={i} d={curve(s, p)} strokeWidth={w} />)}
    </g>
    <g fill="none" stroke="#cdd2e2" strokeWidth="3" strokeLinejoin="round">{ROAD.map(([s, p], i) => <path key={i} d={curve(s, p)} />)}</g>
    <g fill="none" stroke="#d5d9e5" strokeWidth="6" strokeLinejoin="round">{B_ROAD.map(([s, p], i) => <path key={i} d={curve(s, p)} />)}</g>
    <circle cx="1112.500" cy="590" r="6.500" fill="#f5f5f5" stroke="#d5d9e5" strokeWidth="4" />
    <g fill="none" stroke="#8f9bc1" strokeWidth="7.500" strokeLinejoin="round">{A_ROAD.map(([s, p], i) => <path key={i} d={curve(s, p)} />)}</g>
    <circle cx="1141.500" cy="642" r="7" fill="#f5f5f5" stroke="#8f9bc1" strokeWidth="5" />
    <path d={poly("ne", "1248,518 1320,530 1265,580 1225,600 1245,560", true)} fill="#8f9bc1" />
    <circle cx="1222" cy="161" r="3" fill="#f5f5f5" />
    <g fontFamily="Roboto, sans-serif" fontSize="9" textAnchor="middle">
      {LABELS.map(([s, u, v, r, t, k], i) => {
        const [x, y] = place(s, u, v);
        return (
          <text key={i} transform={`translate(${x} ${y}) rotate(${r})`} y="3" fill={k ? LABEL_FILL[k] : "#75777f"} fontWeight={k === "b" ? 500 : 400}>
            {t}
          </text>
        );
      })}
    </g>
    <g opacity=".3">
      <g fill="#f26900">{ORANGE.map(([s, p], i) => <path key={i} d={curve(s, p, true)} />)}</g>
      <g fill="#bd198d">{PINK.map(([s, p], i) => <path key={i} d={curve(s, p, true)} />)}</g>
    </g>
    <path d="M305 60.500h9M305 64h9M306.500 58l4 4l-4 4M312.500 58l-4 4" fill="none" stroke="#e05a4e" strokeWidth="1.200" />
    {PINS.map((p) => <Pin key={p.join()} at={p} fill="#1b2559" />)}
    {VULNERABLE_PINS.map((p) => <Pin key={p.join()} at={p} fill="#e53935" />)}
  </svg>
);

const RiskDonut = () => {
  const arc = (from: number, to: number) => {
    const pt = (a: number) => [46 + 38.5 * Math.sin((a * Math.PI) / 180), 46 - 38.5 * Math.cos((a * Math.PI) / 180)].join(" ");
    return `M${pt(from)}A38.500 38.500 0 ${to - from > 180 ? 1 : 0} 1 ${pt(to)}`;
  };
  return (
    <svg viewBox="0 0 92 92" className="size-[92px] shrink-0" fill="none" strokeWidth="15" role="img" aria-label="Share of each risk area">
      <path d={arc(0, 231)} stroke="#f7b580" />
      <path d={arc(231, 347)} stroke="#e7a5d0" />
      <path d={arc(347, 360)} stroke="#e53935" />
    </svg>
  );
};

/* ------------------------------------------------------------------ */
/* Page parts                                                          */
/* ------------------------------------------------------------------ */

const NAV = [
  { label: "Dashboard", Icon: HomeIcon },
  { label: "Repairs", Icon: ToolsIcon, count: "100" },
  { label: "Reports", Icon: ChartIcon },
  { label: "Contractor List", Icon: PeopleIcon },
  { label: "Insights", Icon: BulbIcon },
];

const KPIS = [
  { value: "3 days", label: "Timeframe for action", alert: true },
  { value: "89", label: "Households affected" },
  { value: "154", label: "Tenants affected" },
  { value: "£525,000", label: "Estimated cost of no action" },
  { value: "£108,000", label: "Estimated cost of action" },
];

const LEGEND = [
  { dot: "bg-[#f7b580]", name: "Medium risk area", note: "(0 - 5cm flood level)" },
  { dot: "bg-[#e7a5d0]", name: "High risk area", note: "(6 - 10cm flood level)" },
  { dot: "bg-[#e53935]", name: "Vulnerable tenants", note: "" },
];

const TopBar = () => (
  <header className="flex h-[69px] items-center justify-between border-b-2 border-[#edf1f5] bg-white pr-[31px] pl-[29px] font-['Inter',sans-serif]">
    <a href="#home" className="flex items-center gap-2 text-[#1b2559]">
      <Logo />
      <span className="text-base leading-5">
        <strong className="block font-semibold">Angbridge &amp; Swanavon</strong>
        <span className="block font-light">Borough Council</span>
      </span>
    </a>
    <button className="flex h-[33px] items-center rounded-full border border-[#222] px-[17px] text-lg">Back to main menu</button>
    <button className="flex h-12 items-center rounded-full bg-[#f5f5f5] pr-[17px] pl-[5px] text-lg">
      <span className="mr-[18px] flex size-[38px] items-center justify-center rounded-full bg-linear-to-br from-[#d5dfea] to-[#a9bfdf] text-[15px] font-medium">RM</span>
      My Account
      <ChevronIcon className="ml-5 h-[10px] w-4" />
    </button>
  </header>
);

const Sidebar = () => (
  <aside className="w-[375px] shrink-0 bg-[#e5edf5] pt-[7px]">
    <nav aria-label="Main">
      <ul>
        {NAV.map(({ label, Icon, count }) => (
          <li key={label}>
            <a href={`#${label}`} className="flex h-[66px] items-center pr-9 pl-[38px] text-xl">
              <Icon className="mr-[18px] h-6 w-[25px] shrink-0" />
              <span className="flex-1">{label}</span>
              {count && <span className="rounded-full bg-white px-[5px] text-base leading-[23px]">{count}</span>}
            </a>
          </li>
        ))}
      </ul>
    </nav>
    <div className="px-[25px] pt-[53px]">
      <button className="h-[67px] w-full rounded-[34px] border border-[#222] bg-[#edf3f7] font-['Inter',sans-serif] text-base font-semibold tracking-wider">
        View Prototype Tenant Experience
      </button>
    </div>
  </aside>
);

type SectionProps = {
  tag: string;
  tagClass: string;
  accent: string;
  bullet: string;
  title: string;
  headerActions: React.ReactNode;
  statuses: { Icon: (p: IconProps) => React.ReactElement; iconClass: string; label: string }[];
  actions: React.ReactNode;
  stats: { value: string; label: string; badge?: string }[];
  action: string;
  considerations: string[];
  contacts: string[];
};

const CONTACT_ICONS = [
  { Icon: ChatIcon, size: "h-[18px] w-[22px]" },
  { Icon: MailIcon, size: "h-[15px] w-[18px]" },
  { Icon: PhoneIcon, size: "size-[18px]" },
];

const PlanSection = (s: SectionProps) => (
  <section>
    <div className="flex h-[113px] items-center justify-between rounded-xl border border-[#eeeeee] bg-white px-[14px]">
      <div className="self-start pt-[14px]">
        <span className={`block w-fit rounded-full px-5 text-sm leading-[30px] font-semibold tracking-widest uppercase ${s.tagClass}`}>{s.tag}</span>
        <h2 className="mt-[15px] text-[30px] leading-[40px] font-semibold">{s.title}</h2>
      </div>
      <div className="flex items-center gap-[30px] font-['Inter',sans-serif] text-[19px] font-semibold tracking-wide">{s.headerActions}</div>
    </div>

    <div className="mt-[21px] flex items-center justify-between px-[15px] font-['Inter',sans-serif] tracking-wide">
      <ul className="flex h-12 items-stretch divide-x divide-[#1b2559] rounded-full border border-[#1b2559] text-[19px] text-[#1b2559]">
        {s.statuses.map(({ Icon, iconClass, label }) => (
          <li key={label} className="flex items-center gap-[14px] pr-[22px] pl-[18px] font-medium">
            <Icon className={iconClass} />
            {label}
          </li>
        ))}
      </ul>
      <div className="flex items-center gap-[10px] text-lg font-semibold">{s.actions}</div>
    </div>

    <div className="mt-5 grid grid-cols-4 gap-3 px-[15px]">
      {s.stats.map((st) => (
        <div key={st.label} className="h-[98px] rounded-[10px] border border-[#e0e0e0] bg-[#eeeeee] px-[14px] pt-[13px]">
          <div className="flex items-center justify-between">
            <span className="text-[30px] leading-[40px] font-semibold">{st.value}</span>
            {st.badge && (
              <span className="rounded-full border border-[#8a8a8a] px-[9px] text-[11px] leading-4 font-semibold tracking-widest uppercase">{st.badge}</span>
            )}
          </div>
          <p className="mt-[5px] text-lg leading-6 text-[#44464c]">{st.label}</p>
        </div>
      ))}
    </div>

    <div className="mt-[26px] grid grid-cols-[477px_406px_1fr] pl-[30px] text-lg leading-[25px]">
      <div>
        <h3 className="mb-[13px] text-[23px] leading-[30px]">Action required</h3>
        <p className="w-[410px] whitespace-pre-wrap">{s.action}</p>
      </div>
      <div>
        <h3 className="mb-[13px] text-[23px] leading-[30px]">Tenant considerations</h3>
        <ul className="flex w-[340px] flex-col gap-[11px] pl-[6px]">
          {s.considerations.map((c) => (
            <li key={c} className="flex gap-[11px]">
              <span className={`mt-[9px] size-2 shrink-0 rounded-full ${s.bullet}`} />
              {c}
            </li>
          ))}
        </ul>
      </div>
      <div>
        <h3 className="mb-[17px] text-[23px] leading-[30px]">Household Contact Methods</h3>
        <ul className="flex flex-col gap-[19px]">
          {s.contacts.map((c, i) => {
            const { Icon, size } = CONTACT_ICONS[i];
            return (
              <li key={c} className="flex items-center">
                <span className={`mr-[4px] -ml-[2px] flex w-[23px] justify-center ${s.accent}`}>
                  <Icon className={size} />
                </span>
                {c}
              </li>
            );
          })}
        </ul>
      </div>
    </div>
  </section>
);

const darkButton = "h-[46px] rounded-full bg-[#1b2559] px-5 text-[#262626]";

export default function App() {
  return (
    <div className="h-screen overflow-hidden bg-[#c9c9c9] pr-[38px] pl-[59px] font-['Open_Sans',sans-serif] text-[#262626]">
      <p className="h-[73px] pt-[31px] font-['Inter',sans-serif] text-[22px] leading-7 text-[#5e5e5e]">Insights Detail_notified</p>

      <div className="relative bg-white">
        <TopBar />
        <div className="flex">
          <Sidebar />
          <main className="min-w-0 flex-1 bg-[#f5f5f5]">
            <div className="border-b-2 border-[#ef5350] bg-white px-[51px] pt-[39px] pb-[30px]">
              <nav aria-label="Breadcrumb" className="flex gap-[9px] text-base leading-6 text-[#757575]">
                <a href="#insights" className="text-[#33353a]">Insights</a>
                <span>/</span>
                <span>Flood Risk</span>
              </nav>
              <h1 className="mt-[20px] text-[38px] leading-[52px]">Flood Risk in SS0, SS2</h1>
              <p className="mt-[10px] text-[21px] leading-7 text-[#33353a]">
                Weather warnings suggest extreme flooding in local, densely populated areas where multiple tenant properties are located.
              </p>
            </div>

            <div className="flex h-[69px] items-center justify-between bg-[#e0e0e0] pr-[82px] pl-[51px]">
              <div className="flex gap-[6px] text-base leading-[31px]">
                <span className="rounded-full bg-[#c62828] px-[22px] text-white">High risk</span>
                <span className="rounded-full bg-white px-[22px]">Property Maintenance</span>
              </div>
              <button aria-label="Bookmark" className="text-[#1b2559]">
                <BookmarkIcon className="h-[21px] w-4" />
              </button>
            </div>

            <div className="pt-[30px] pr-[51px] pl-[51px]">
              <div className="grid grid-cols-5 gap-4">
                {KPIS.map((k) => (
                  <div key={k.label} className={`h-[108px] rounded-[10px] border bg-white px-[14px] pt-3 ${k.alert ? "border-[#ef9a9a]" : "border-[#eeeeee]"}`}>
                    <p className="flex items-center gap-[14px] text-[38px] leading-[52px]">
                      {k.alert && <WarningIcon className="h-[28px] w-8 text-[#e53935]" />}
                      {k.value}
                    </p>
                    <p className="mt-[3px] text-lg leading-6 whitespace-nowrap text-[#33353a]">{k.label}</p>
                  </div>
                ))}
              </div>

              <div className="mt-[30px] rounded-xl border border-[#eeeeee] bg-white py-[15px] pr-[18px] pl-[15px]">
                <div className="relative overflow-hidden rounded-xl">
                  <FloodMap />
                  <div className="absolute bottom-[41px] left-0 flex h-[147px] items-center rounded-r-xl bg-white pr-[30px] pl-[29px]">
                    <RiskDonut />
                    <ul className="ml-[15px] text-xl leading-[39px] whitespace-nowrap">
                      {LEGEND.map((l) => (
                        <li key={l.name} className="flex items-center">
                          <span className={`mr-[10px] size-5 rounded-full ${l.dot}`} />
                          <span className="font-semibold">{l.name}</span>
                          {l.note && <span className="ml-[5px] text-lg leading-[39px]">{l.note}</span>}
                        </li>
                      ))}
                    </ul>
                  </div>
                </div>
              </div>

              <div className="mt-[60px] flex flex-col gap-[88px]">
                <PlanSection
                  tag="Vulnerable tenants"
                  tagClass="bg-[#c64543] text-white"
                  accent="text-[#c64543]"
                  bullet="bg-[#c64543]"
                  title="Tenant Evacuation"
                  headerActions={
                    <button disabled className="h-[53px] w-[247px] rounded-full border border-[#e0e0e0] text-[#9a9ea8]">Track progress</button>
                  }
                  statuses={[{ Icon: WarningIcon, iconClass: "h-4 w-[18px]", label: "0 households notified" }]}
                  actions={<button className={darkButton}>Launch evacuation protocol</button>}
                  stats={[
                    { value: "6-10cm", label: "Estimated flood level protection" },
                    { value: "4", label: "Tenants affected" },
                    { value: "1 days", label: "Estimated time to install" },
                    { value: "£8,000", label: "Estimated cost", badge: "Temporary solution" },
                  ]}
                  action="Tenants who required medical equipment and live on the ground floor  need to be transferred from the property in order to ensure their safety."
                  considerations={["4 tenants with extreme medical vulnerabilities", "no children", "4 households"]}
                  contacts={["2 registered for SMS notification", "1 registered for email communication", "1 require telephone communication"]}
                />
                <PlanSection
                  tag="High risk area"
                  tagClass="bg-[#f3b9dd] text-[#33353a]"
                  accent="text-[#f3b9dd]"
                  bullet="bg-[#f3b9dd]"
                  title="Steel Panel Installation"
                  headerActions={
                    <>
                      <a href="#unresponsive" className="text-[#1b2559]">View unresponsive households</a>
                      <button className="h-[53px] w-[247px] rounded-full bg-[#b9449a] text-white">Track progress</button>
                    </>
                  }
                  statuses={[
                    { Icon: CheckIcon, iconClass: "h-[14px] w-[18px]", label: "14 households notified" },
                    { Icon: CalendarIcon, iconClass: "h-[18px] w-[17px]", label: "9 households booked slots" },
                  ]}
                  actions={
                    <>
                      <button disabled className="flex h-[46px] items-center gap-[14px] rounded-full bg-[#ececec] pr-5 pl-6 text-[#9a9ea8]">
                        <CheckIcon className="h-[14px] w-[17px]" />
                        14 SMS sent
                      </button>
                      <button className={darkButton}>Notify by email</button>
                      <button className={darkButton}>Notify by phone</button>
                    </>
                  }
                  stats={[
                    { value: "6-10cm", label: "Estimated flood level protection" },
                    { value: "28", label: "Households affected" },
                    { value: "2 days", label: "Estimated time to install" },
                    { value: "£23,000", label: "Estimated cost", badge: "Reusable solution" },
                  ]}
                  action="Property entranceways are measured and steel panels are made to fit. Installation is required whilst tenants are at home. Tenants will receive instruction and documentation and post support."
                  considerations={["14 children under 16", "25 elderly tenants", "28 households"]}
                  contacts={["14 registered for SMS notification", "10 registered for email communication", "4 require telephone communication"]}
                />
              </div>
            </div>
          </main>
        </div>

        <div role="status" className="absolute top-[94px] -right-[6px] flex h-[60px] w-[662px] items-center rounded-l-lg border border-r-0 border-[#85c191] bg-[#e7f5e9] pl-[14px] font-['Inter',sans-serif] text-lg font-semibold">
          <CircleCheckIcon className="mr-[19px] size-[31px] text-[#2e7d32]" />
          SMS notification sent to 14 households in High Risk Area
        </div>
      </div>
    </div>
  );
}
